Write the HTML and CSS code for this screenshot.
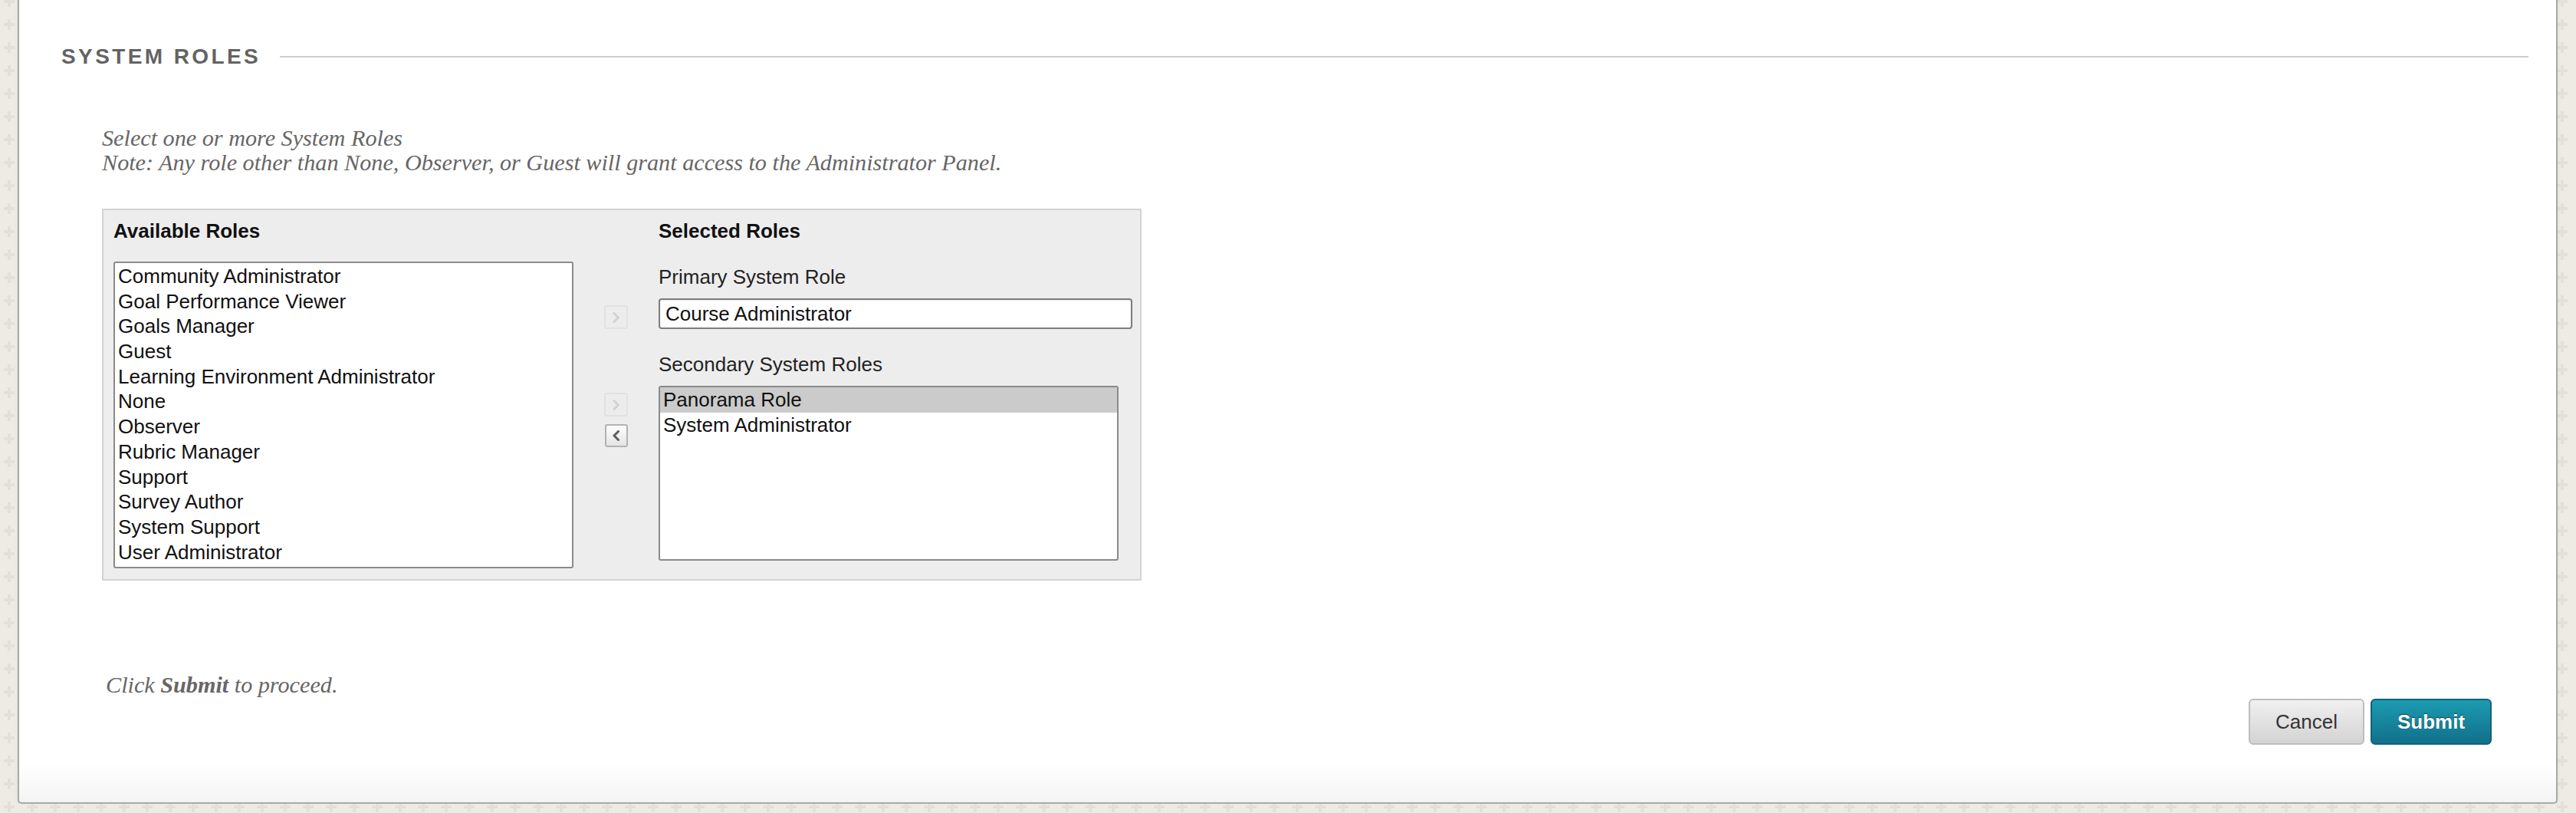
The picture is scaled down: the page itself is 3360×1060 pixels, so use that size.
FILE: index.html
```html
<!DOCTYPE html>
<html lang="en">
<head>
  <meta charset="UTF-8" />
  <title>System Roles</title>
  <link rel="stylesheet" href="styles.css">
</head>
<body>

  <div class="panel">
    <div class="step-head">
      <h2>System Roles</h2>
      <span class="rule"></span>
    </div>

    <div class="step-body">
      <p class="instructions">
        Select one or more System Roles<br>
        Note: Any role other than None, Observer, or Guest will grant access to the Administrator Panel.
      </p>

      <div class="picker">
        <div class="picker-col available">
          <h3>Available Roles</h3>
          <ul class="listbox tall">
            <li>Community Administrator</li>
            <li>Goal Performance Viewer</li>
            <li>Goals Manager</li>
            <li>Guest</li>
            <li>Learning Environment Administrator</li>
            <li>None</li>
            <li>Observer</li>
            <li>Rubric Manager</li>
            <li>Support</li>
            <li>Survey Author</li>
            <li>System Support</li>
            <li>User Administrator</li>
          </ul>
        </div>

        <!-- move buttons -->
        <div class="picker-arrows">
          <button class="arrow off first" title="Set primary role">
            <svg width="12" height="14" viewBox="0 0 12 14"><polyline points="3,1.5 8.5,7 3,12.5" /></svg>
          </button>
          <button class="arrow off second" title="Add secondary role">
            <svg width="12" height="14" viewBox="0 0 12 14"><polyline points="3,1.5 8.5,7 3,12.5" /></svg>
          </button>
          <button class="arrow third" title="Remove role">
            <svg width="12" height="14" viewBox="0 0 12 14"><polyline points="8.5,1.5 3,7 8.5,12.5" /></svg>
          </button>
        </div>

        <div class="picker-col selected">
          <h3>Selected Roles</h3>
          <label class="field-label first">Primary System Role</label>
          <div class="textbox">Course Administrator</div>
          <label class="field-label">Secondary System Roles</label>
          <ul class="listbox short">
            <li class="on">Panorama Role</li>
            <li>System Administrator</li>
          </ul>
        </div>
      </div>
    </div>

    <div class="submit-row">
      <p class="proceed">Click <b>Submit</b> to proceed.</p>
      <div class="buttons">
        <button class="btn cancel">Cancel</button>
        <button class="btn submit">Submit</button>
      </div>
    </div>
  </div>

</body>
</html>
```

FILE: styles.css
```css
body {
  margin: 0;
  font-family: "Liberation Sans", Arial, sans-serif;
  background-color: #edebe4;
  background-image: url("data:image/svg+xml,%3Csvg xmlns='http://www.w3.org/2000/svg' width='30' height='30'%3E%3Cpath d='M13 8h4v5h5v4h-5v5h-4v-5H8v-4h5z' fill='%23e2e0d8'/%3E%3C/svg%3E");
  background-position: -3px 17px;
  overflow: hidden;
}

.panel {
  margin: 0 24px 0 23px;
  background: linear-gradient(#fff 0, #fff calc(100% - 50px), #f4f4f4 100%);
  border: 2px solid #a9a9a9;
  border-top: 0;
  border-radius: 0 0 5px 5px;
  box-shadow: 0 0 4px rgba(0, 0, 0, 0.08);
}

/* Step heading */
.step-head {
  display: flex;
  align-items: center;
  padding: 58px 36px 0 55px;
}

.step-head h2 {
  margin: 0;
  font-size: 28px;
  line-height: 32px;
  font-weight: bold;
  letter-spacing: 3.4px;
  text-transform: uppercase;
  color: #636363;
}

.step-head .rule {
  flex: 1;
  height: 2px;
  margin-left: 25px;
  background: #cdcdcd;
}

.step-body {
  padding-left: 108px;
}

.instructions {
  margin: 74px 0 0;
  font-family: "Liberation Serif", Georgia, serif;
  font-style: italic;
  font-size: 30.2px;
  line-height: 32px;
  color: #666;
}

/* Role picker */
.picker {
  display: inline-flex;
  gap: 40px;
  margin-top: 44px;
  padding: 12px 10px 14px 13px;
  background: #ededed;
  border: 2px solid #d3d3d3;
}

.picker-col h3 {
  margin: 0;
  font-size: 26px;
  line-height: 30px;
  font-weight: bold;
  color: #111;
}

.available {
  width: 600px;
}

.selected {
  width: 618px;
}

.listbox {
  list-style: none;
  margin: 0;
  padding: 1px 0 0;
  box-sizing: border-box;
  background: #fff;
  border: 2px solid #8a8a8a;
  border-radius: 3px;
  font-size: 26px;
  color: #111;
}

.listbox li {
  height: 32.7px;
  line-height: 32.7px;
  padding: 0 4px;
  white-space: nowrap;
}

.listbox li.on {
  background: #cbcbcb;
}

.listbox.tall {
  width: 600px;
  height: 400px;
  margin-top: 25px;
}

.listbox.short {
  width: 600px;
  height: 228px;
  margin-top: 13px;
  padding-top: 0;
}

.field-label {
  display: block;
  margin-top: 31px;
  font-size: 26px;
  line-height: 30px;
  color: #222;
}

.field-label.first {
  margin-top: 30px;
}

.textbox {
  box-sizing: border-box;
  height: 40px;
  margin-top: 13px;
  padding: 0 7px;
  background: #fff;
  border: 2px solid #7d7d7d;
  border-radius: 4px;
  box-shadow: inset 0 1px 2px rgba(0, 0, 0, 0.1);
  font-size: 26px;
  line-height: 36px;
  color: #111;
}

.picker-arrows {
  display: flex;
  flex-direction: column;
  width: 31px;
}

.arrow {
  display: flex;
  align-items: center;
  justify-content: center;
  width: 30px;
  height: 30px;
  padding: 0;
  border: 2px solid #b3b3b3;
  border-radius: 3px;
  background: linear-gradient(#fdfdfd, #e4e4e4);
  cursor: pointer;
}

.arrow svg polyline {
  fill: none;
  stroke: #5c5c5c;
  stroke-width: 3;
  stroke-linecap: round;
  stroke-linejoin: round;
}

.arrow.off {
  width: 31px;
  height: 31px;
  border-color: #e1e1e1;
  background: #ececec;
  cursor: default;
}

.arrow.off svg polyline {
  stroke: #d2d2d2;
}

.arrow.first {
  margin-top: 112px;
}

.arrow.second {
  margin-top: 83px;
}

.arrow.third {
  margin-top: 10px;
  margin-left: 1px;
}

/* Submit step */
.submit-row {
  display: flex;
  justify-content: space-between;
  align-items: flex-start;
  padding: 0 84px 75px 113px;
}

.proceed {
  margin: 120px 0 0;
  font-family: "Liberation Serif", Georgia, serif;
  font-style: italic;
  font-size: 30.2px;
  line-height: 32px;
  color: #666;
}

.buttons {
  display: flex;
  gap: 8px;
  margin-top: 154px;
}

.btn {
  height: 60px;
  border-radius: 6px;
  font-family: "Liberation Sans", Arial, sans-serif;
  font-size: 26px;
  cursor: pointer;
}

.btn.cancel {
  width: 151px;
  color: #333;
  background: linear-gradient(#f0f0f0, #d3d3d3);
  border: 2px solid #bdbdbd;
}

.btn.submit {
  width: 158px;
  color: #fff;
  font-weight: bold;
  background: linear-gradient(#1b9bb1, #12708a);
  border: 2px solid #0f6479;
  text-shadow: 0 -1px 1px rgba(0, 0, 0, 0.55);
}
```
